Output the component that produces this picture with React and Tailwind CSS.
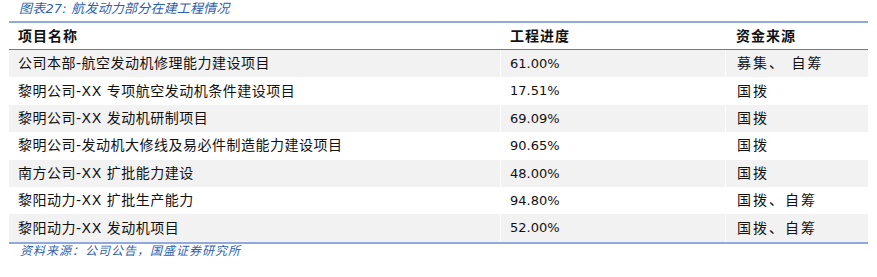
export default function App() {
  const rows = [
    ["公司本部-航空发动机修理能力建设项目", "61.00%", "募集、 自筹"],
    ["黎明公司-XX 专项航空发动机条件建设项目", "17.51%", "国拨"],
    ["黎明公司-XX 发动机研制项目", "69.09%", "国拨"],
    ["黎明公司-发动机大修线及易必件制造能力建设项目", "90.65%", "国拨"],
    ["南方公司-XX 扩批能力建设", "48.00%", "国拨"],
    ["黎阳动力-XX 扩批生产能力", "94.80%", "国拨、自筹"],
    ["黎阳动力-XX 发动机项目", "52.00%", "国拨、自筹"],
  ];
  const cjk = { fontFamily: '"DejaVu Sans","Noto Sans CJK SC",sans-serif' };
  return (
    <div className="w-[877px] h-[277px] bg-white overflow-hidden" style={cjk}>
      <div className="h-[21px] pl-[19px] pt-[1px] text-[13px] leading-[16px] italic text-[#2e5fae] tracking-[0.2px]">
        图表27: 航发动力部分在建工程情况
      </div>
      <div className="ml-[9px] w-[859px] border-t-2 border-b-2 border-[#8eaad8]">
        <div className="flex h-[27px] items-center border-b border-[#4f81c5] text-[14px] font-bold text-[#111]">
          <div className="w-[491px] pl-[9px] tracking-[1px]">项目名称</div>
          <div className="w-[225px] pl-[10px] tracking-[1px]">工程进度</div>
          <div className="flex-1 pl-[11px] tracking-[1px]">资金来源</div>
        </div>
        {rows.map((r, i) => (
          <div
            key={i}
            className={`flex h-[27.4px] items-center text-[14px] text-[#111] ${i % 2 === 0 ? "bg-[#f2f2f2]" : "bg-white"}`}
          >
            <div className="w-[491px] pl-[9px] tracking-[0.5px]">{r[0]}</div>
            <div className="w-[225px] h-full flex items-center pl-[9px] border-l border-white text-[13px]">{r[1]}</div>
            <div className="flex-1 h-full flex items-center pl-[11px] border-l border-white tracking-[2px]">{r[2]}</div>
          </div>
        ))}
      </div>
      <div className="pl-[20px] text-[12px] leading-[14px] italic text-[#2e5fae] tracking-[1px]">
        资料来源：公司公告，国盛证券研究所
      </div>
    </div>
  );
}
